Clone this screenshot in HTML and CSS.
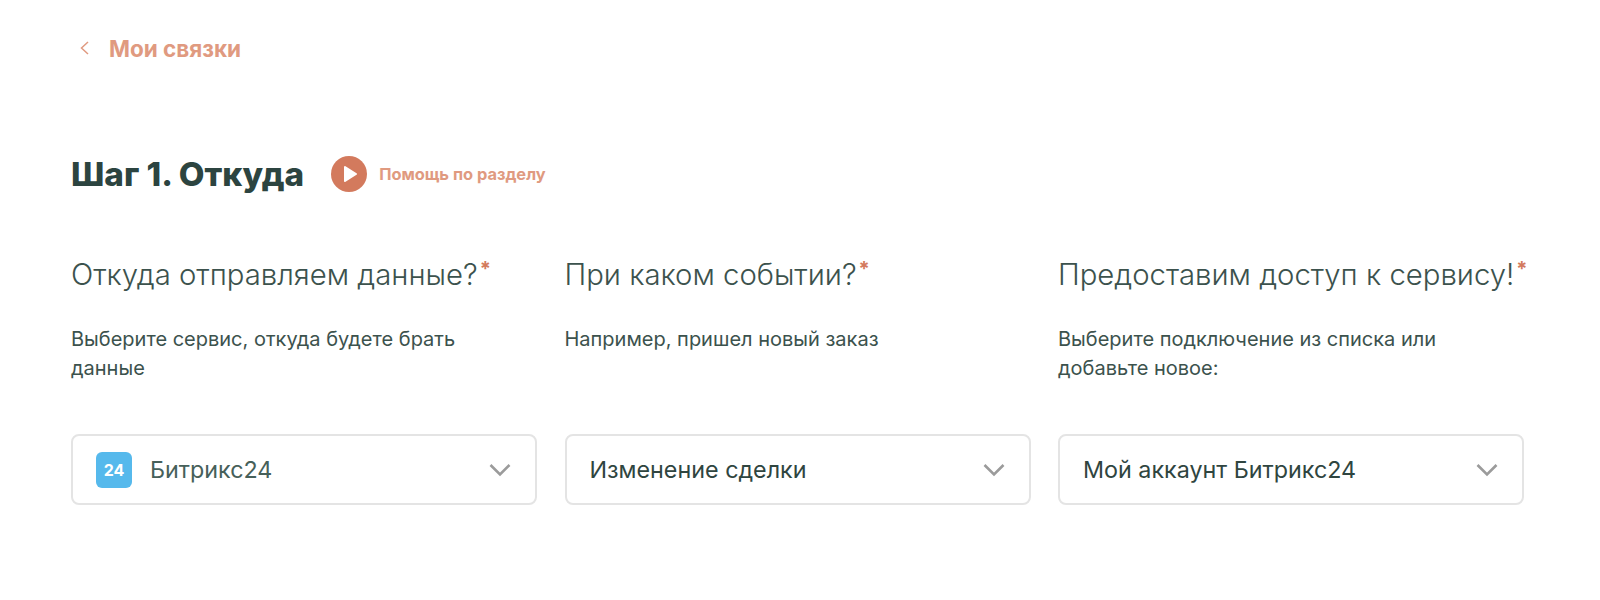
FILE: index.html
```html
<!DOCTYPE html>
<html lang="ru">
<head>
<meta charset="utf-8">
<title>Шаг 1. Откуда</title>
<link rel="stylesheet" href="styles.css">
</head>
<body>
<main class="page">
  <a class="back">
    <svg class="back-icon" width="9" height="14" viewBox="0 0 9 14"><path d="M8 1 L1.5 7 L8 13" fill="none" stroke="#e09a80" stroke-width="1.5"/></svg>
    <span>Мои связки</span>
  </a>
  <div class="head">
    <h1>Шаг 1. Откуда</h1>
    <a class="help">
      <svg class="play" width="36" height="36" viewBox="0 0 36 36"><circle cx="18" cy="18" r="18" fill="#d37a5d"/><path d="M14 11 L25 18 L14 25 Z" fill="#fff" stroke="#fff" stroke-width="2" stroke-linejoin="round"/></svg>
      <span>Помощь по разделу</span>
    </a>
  </div>
  <div class="cols">
    <section class="col">
      <h2>Откуда отправляем данные?<sup>*</sup></h2>
      <p>Выберите сервис, откуда будете брать данные</p>
      <div class="select">
        <span class="logo">24</span>
        <span class="value light">Битрикс24</span>
        <svg class="chev" width="22" height="14" viewBox="0 0 22 14"><path d="M1.5 2 L11 11.5 L20.5 2" fill="none" stroke="#9b9b9b" stroke-width="2.6"/></svg>
      </div>
    </section>
    <section class="col">
      <h2>При каком событии?<sup>*</sup></h2>
      <p>Например, пришел новый заказ</p>
      <div class="select">
        <span class="value">Изменение сделки</span>
        <svg class="chev" width="22" height="14" viewBox="0 0 22 14"><path d="M1.5 2 L11 11.5 L20.5 2" fill="none" stroke="#9b9b9b" stroke-width="2.6"/></svg>
      </div>
    </section>
    <section class="col">
      <h2>Предоставим доступ к сервису!<sup>*</sup></h2>
      <p>Выберите подключение из списка или добавьте новое:</p>
      <div class="select">
        <span class="value">Мой аккаунт Битрикс24</span>
        <svg class="chev" width="22" height="14" viewBox="0 0 22 14"><path d="M1.5 2 L11 11.5 L20.5 2" fill="none" stroke="#9b9b9b" stroke-width="2.6"/></svg>
      </div>
    </section>
  </div>
</main>
</body>
</html>
```
FILE: styles.css
```css
* { box-sizing: border-box; }
html, body { margin: 0; background: #fff; }
body { font-family: "Inter", "Noto Sans", sans-serif; color: #2f4540; }
.page { width: 1600px; height: 600px; padding: 35px 77px 0 71px; overflow: hidden; }
.back { display: flex; align-items: center; height: 26px; padding-left: 9px; gap: 20px; color: #e09a80; font-size: 22.5px; font-weight: 700; }
.back-icon { flex: none; }
.head { display: flex; align-items: center; margin-top: 95px; height: 36px; }
h1 { margin: 0; font-size: 33.3px; line-height: 36px; font-weight: 800; color: #2c4440; }
.help { display: flex; align-items: center; margin-left: 27px; gap: 12px; color: #e09a80; font-size: 16.4px; font-weight: 700; }
.play { flex: none; }
.cols { display: grid; grid-template-columns: repeat(3, 466px); column-gap: 27.5px; margin-top: 65px; }
.col { display: flex; flex-direction: column; }
h2 { margin: 0; font-size: 29.3px; line-height: 36px; font-weight: 300; color: #3c524d; white-space: nowrap; }
sup { margin-left: 2px; color: #d37a5d; font-size: 20px; font-weight: 700; line-height: 0; vertical-align: 9px; }
p { margin: 32px 0 0; height: 57px; padding-right: 20px; font-size: 20px; line-height: 28.6px; color: #3c524d; font-weight: 400; }
.select { display: flex; align-items: center; height: 71px; margin-top: 52px; padding: 0 24px 0 23px; border: 2px solid #e4e4e4; border-radius: 8px; }
.logo { flex: none; width: 36px; height: 36px; margin-right: 18px; display: flex; align-items: center; justify-content: center; background: #56b9ec; border-radius: 6px; color: #fff; font-size: 16px; font-weight: 700; }
.value { flex: 1; font-size: 23.3px; color: #2f4540; }
.value.light { color: #46605a; }
.chev { flex: none; }
```
